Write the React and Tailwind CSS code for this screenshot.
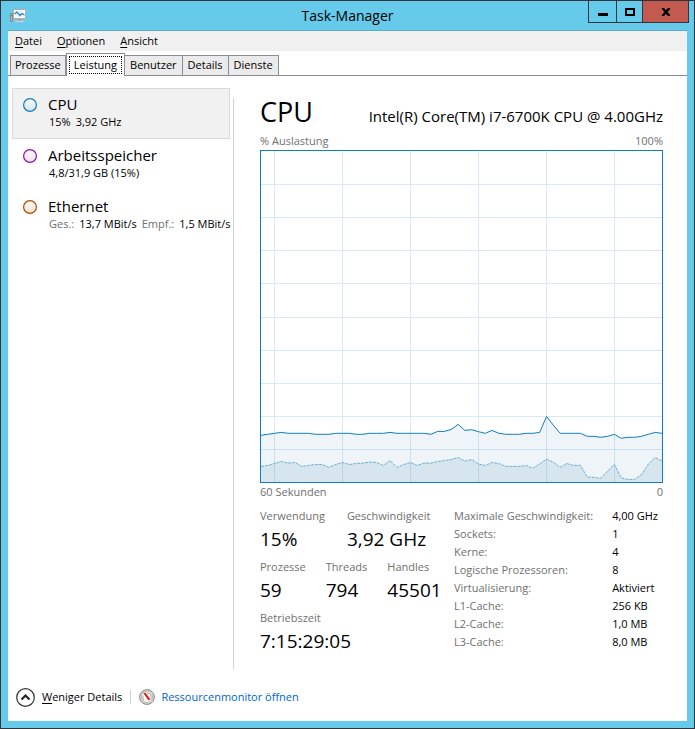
import { useState } from 'react';
import clsx from 'clsx';

const menus = ['Datei', 'Optionen', 'Ansicht'];
const tabs = ['Prozesse', 'Leistung', 'Benutzer', 'Details', 'Dienste'];

const resources = [
  { id: 'cpu', name: 'CPU', stroke: '#117dbb', fill: '#cfe3f0', text: [['', '15%'], ['', '3,92 GHz']] },
  { id: 'mem', name: 'Arbeitsspeicher', stroke: '#8b12ae', fill: '#f0dcf6', text: [['', '4,8/31,9 GB (15%)']] },
  { id: 'net', name: 'Ethernet', stroke: '#a74f01', fill: '#fce0cb', text: [['Ges.:', '13,7 MBit/s'], ['Empf.:', '1,5 MBit/s']] },
];

const details = [
  ['Maximale Geschwindigkeit:', '4,00 GHz'],
  ['Sockets:', '1'],
  ['Kerne:', '4'],
  ['Logische Prozessoren:', '8'],
  ['Virtualisierung:', 'Aktiviert'],
  ['L1-Cache:', '256 KB'],
  ['L2-Cache:', '1,0 MB'],
  ['L3-Cache:', '8,0 MB'],
];

// one sample per second, in percent
const total = [
  14.1, 14.4, 14.7, 15, 14.7, 14.7, 14.7, 14.7, 14.4, 14.4, 14.4, 14.7, 14.7, 14.7, 14.4,
  14.4, 14.7, 14.7, 14.7, 15, 14.7, 14.7, 14.7, 14.7, 14.7, 14.4, 15.3, 15.3, 15.9, 17.4,
  15.6, 15.8, 15.2, 14.7, 15.6, 14.7, 14.4, 14.4, 14.4, 14.7, 14.7, 15, 19.8, 17.2, 14.7,
  14.7, 14.7, 14.7, 13.8, 13.8, 13.5, 13.8, 14.4, 13.2, 13.5, 13.5, 13.8, 14.4, 15, 14.7,
];
const kernel = [
  4.7, 5, 5.6, 6.2, 5.7, 5.9, 4.7, 5, 5.3, 5.3, 4.4, 5.3, 5.9, 5.3, 5.6,
  5.7, 6, 5.9, 5, 6.5, 4.4, 5.3, 5.9, 5, 5.7, 5.7, 6.2, 6.5, 6.8, 7.4,
  6.3, 6.8, 5.4, 5, 5.9, 5.6, 4.7, 4.7, 4.7, 5, 4.1, 5.5, 6.9, 6, 4.4,
  5.6, 5, 5, 1.5, 1.4, 1.1, 3.3, 5.3, 1.2, 0.8, 0.8, 2.3, 5.4, 7.4, 6.3,
];

const W = 401;
const H = 331;

const toPoints = (data) =>
  data.map((v, i) => `${((i * W) / (data.length - 1)).toFixed(1)},${(H - (v * H) / 100).toFixed(1)}`).join(' ');

function UsageChart() {
  const totalPoints = toPoints(total);
  const kernelPoints = toPoints(kernel);
  return (
    <svg
      viewBox={`0 0 ${W} ${H}`}
      preserveAspectRatio="none"
      className="block h-[333px] w-full border border-[#117dbb] bg-white"
      role="img"
      aria-label="% Auslastung"
    >
      <g stroke="#d9eaf4" strokeWidth="1">
        {[13.5, 81.5, 149.5, 217.5, 285.5, 353.5].map((x) => (
          <path key={x} d={`M${x} 0V${H}`} />
        ))}
        {[33.5, 66.5, 99.5, 132.5, 166.5, 199.5, 232.5, 265.5, 298.5].map((y) => (
          <path key={y} d={`M0 ${y}H${W}`} />
        ))}
      </g>
      <polygon points={`0,${H} ${totalPoints} ${W},${H}`} fill="#1169a0" fillOpacity="0.07" />
      <polygon points={`0,${H} ${kernelPoints} ${W},${H}`} fill="#1169a0" fillOpacity="0.1" />
      <polyline points={kernelPoints} fill="none" stroke="#117dbb" strokeOpacity="0.55" strokeDasharray="3 1" />
      <polyline points={totalPoints} fill="none" stroke="#117dbb" />
    </svg>
  );
}

function AppIcon() {
  return (
    <svg width="16" height="16" viewBox="0 0 16 16" aria-hidden="true">
      <path d="M.5 5.500h2v8h-2z" fill="#b4b4b4" stroke="#8f8983" />
      <path d="M1 7.500h1.500" stroke="#3fae3f" />
      <path d="M3.500 1.500h12v9h-12z" fill="#fff" stroke="#b5aca4" />
      <path d="M5 3h9v6H5z" fill="#eaf5fb" />
      <path d="M4.500 6L7 4l3 3.500L12 5.500l2.500 1.500" fill="none" stroke="#1f82c4" strokeWidth="1.200" />
      <path d="M8 11h3v2H8z" fill="#a59d96" />
      <path d="M5.500 13.500h8" stroke="#d6d0ca" strokeWidth="1.500" />
    </svg>
  );
}

function GaugeIcon() {
  return (
    <svg width="16" height="16" viewBox="0 0 16 16" aria-hidden="true">
      <circle cx="8" cy="8" r="7.400" fill="#dedbd8" stroke="#8a8681" />
      <circle cx="8" cy="8" r="5.600" fill="#fff" stroke="#b0aca8" strokeWidth="0.800" />
      <path d="M4.800 11a4.500 4.500 0 0 1-.8-4.500M8 4a4 4 0 0 1 3.300 6.500" fill="none" stroke="#8d8984" strokeWidth="0.800" />
      <path d="M4 3.500L6.800 4l4.400 6.200-1.700 1.300z" fill="#dc1a1a" />
    </svg>
  );
}

function Stat({ label, value }) {
  return (
    <div>
      <dt className="text-[11px] leading-[18px] text-[#707070]">{label}</dt>
      <dd className="text-[19px] leading-7">{value}</dd>
    </div>
  );
}

function AccessKey({ children }) {
  return (
    <>
      <span className="underline underline-offset-2">{children[0]}</span>
      {children.slice(1)}
    </>
  );
}

export default function App() {
  const [tab, setTab] = useState('Leistung');
  const [resource, setResource] = useState('cpu');

  return (
    <div className="flex min-h-screen flex-col border border-[#33333b] bg-[#66caea] px-[7px] pb-[7px] font-['Open_Sans','Noto_Sans',sans-serif] text-black">
      {/* Title bar */}
      <header className="relative flex h-[29px] shrink-0 items-center px-0.5">
        <AppIcon />
        <h1 className="flex-1 pr-4 text-center text-sm">Task-Manager</h1>
        <div className="absolute -top-px right-0 -mr-0.5 flex h-[23px] border border-[#33333b]">
          <button aria-label="Minimieren" className="flex w-7 items-center justify-center border-r border-[#33333b]">
            <svg width="10" height="10"><path d="M0 6h10v3H0z" /></svg>
          </button>
          <button aria-label="Maximieren" className="flex w-[26px] items-center justify-center border-r border-[#33333b]">
            <svg width="10" height="8"><path d="M1 1h8v6H1z" fill="none" stroke="#000" strokeWidth="2" /></svg>
          </button>
          <button aria-label="Schließen" className="flex w-[45px] items-center justify-center bg-[#c35a50]">
            <svg width="10" height="8" viewBox="0 0 10 8"><path d="M1.500 0l7 8M8.500 0l-7 8" stroke="#000" strokeWidth="2.400" /></svg>
          </button>
        </div>
      </header>

      <div className="flex flex-1 flex-col border-t border-[#5fa9c4] bg-white">
        {/* Menu */}
        <nav className="flex h-5 shrink-0 items-center gap-[15px] bg-[#f0f0f0] px-[7px] text-[11px]">
          {menus.map((m) => (
            <button key={m}><AccessKey>{m}</AccessKey></button>
          ))}
        </nav>

        {/* Tabs */}
        <div role="tablist" className="flex h-[25px] shrink-0 items-end border-b border-[#8c8c98] px-0.5">
          {tabs.map((t) => (
            <button
              key={t}
              role="tab"
              aria-selected={t === tab}
              onClick={() => setTab(t)}
              className={clsx(
                'border-[#8c8c98] text-[11px] whitespace-nowrap',
                t === tab
                  ? '-mb-px h-[23px] border-x border-t bg-white p-0.5 pb-1'
                  : 'h-5 border-t border-r bg-[#ebebeb] px-[5px] first:border-l first:px-1'
              )}
            >
              {t === tab ? (
                <span className="block border border-dotted border-black px-1 leading-4">{t}</span>
              ) : (
                t
              )}
            </button>
          ))}
        </div>

        <div className="flex flex-1 pt-3">
          {/* Resource list */}
          <aside className="mr-[2px] w-[223px] shrink-0 pl-1 pr-px">
            {resources.map((r) => (
              <button
                key={r.id}
                onClick={() => setResource(r.id)}
                className={clsx(
                  'flex h-[51px] w-full items-start gap-[11px] border pt-1.5 pl-2.5 text-left',
                  r.id === resource ? 'border-[#dadada] bg-[#f1f1f1]' : 'border-transparent'
                )}
              >
                <svg width="14" height="14" viewBox="0 0 14 14" className="mt-[3px] shrink-0">
                  <linearGradient id={r.id} x2="0" y2="1">
                    <stop offset="0" stopColor="#fff" />
                    <stop offset="1" stopColor={r.fill} />
                  </linearGradient>
                  <circle cx="7" cy="7" r="6.400" fill={`url(#${r.id})`} stroke={r.stroke} strokeWidth="1.200" />
                </svg>
                <span className="block">
                  <span className="block text-[15px] leading-[18px]">{r.name}</span>
                  <span className="flex gap-[5px] pl-px text-[11px] leading-[18px] whitespace-nowrap">
                    {r.text.map(([label, value]) => (
                      <span key={value} className="flex gap-[5px]">
                        {label && <span className="text-[#707070]">{label}</span>}
                        {value}
                      </span>
                    ))}
                  </span>
                </span>
              </button>
            ))}
          </aside>

          {/* CPU details */}
          <main className="mt-2.5 flex-1 border-l border-[#d4d4d4] pr-6 pl-[26px]">
            <div className="flex items-baseline justify-between">
              <h2 className="text-[27px] leading-7">CPU</h2>
              <p className="text-[15px] leading-7">Intel(R) Core(TM) i7-6700K CPU @ 4.00GHz</p>
            </div>
            <div className="flex justify-between pt-[3px] pb-px text-[11px] leading-4 text-[#707070]">
              <span>% Auslastung</span>
              <span>100%</span>
            </div>
            <UsageChart />
            <div className="flex justify-between text-[11px] leading-[18px] text-[#707070]">
              <span>60 Sekunden</span>
              <span>0</span>
            </div>

            <div className="mt-1.5 flex justify-between">
              <div className="space-y-[5px]">
                <dl className="flex gap-[22px]">
                  <Stat label="Verwendung" value="15%" />
                  <Stat label="Geschwindigkeit" value="3,92 GHz" />
                </dl>
                <dl className="flex gap-5">
                  <Stat label="Prozesse" value="59" />
                  <Stat label="Threads" value="794" />
                  <Stat label="Handles" value="45501" />
                </dl>
                <dl>
                  <Stat label="Betriebszeit" value="7:15:29:05" />
                </dl>
              </div>
              <table className="self-start text-left text-[11px] leading-[18px] whitespace-nowrap">
                <tbody>
                  {details.map(([label, value]) => (
                    <tr key={label}>
                      <th className="p-0 pr-[19px] font-normal text-[#707070]">{label}</th>
                      <td className="p-0 pr-[5px]">{value}</td>
                    </tr>
                  ))}
                </tbody>
              </table>
            </div>
          </main>
        </div>

        {/* Footer */}
        <footer className="flex h-[52px] shrink-0 items-center gap-2 px-2 pt-1 text-[11px]">
          <button className="flex items-center gap-[7px]">
            <svg width="19" height="19" viewBox="0 0 19 19" aria-hidden="true">
              <circle cx="9.500" cy="9.500" r="8.800" fill="#fff" stroke="#333" strokeWidth="1.200" />
              <path d="M5.500 11.500l4-4 4 4" fill="none" stroke="#222" strokeWidth="2.200" />
            </svg>
            <span><AccessKey>Weniger Details</AccessKey></span>
          </button>
          <span className="h-3.5 w-px bg-[#d0d0d0]" />
          <a href="#" className="flex items-center gap-1.5 text-[#0066cc]">
            <GaugeIcon />
            Ressourcenmonitor öffnen
          </a>
        </footer>
      </div>
    </div>
  );
}
